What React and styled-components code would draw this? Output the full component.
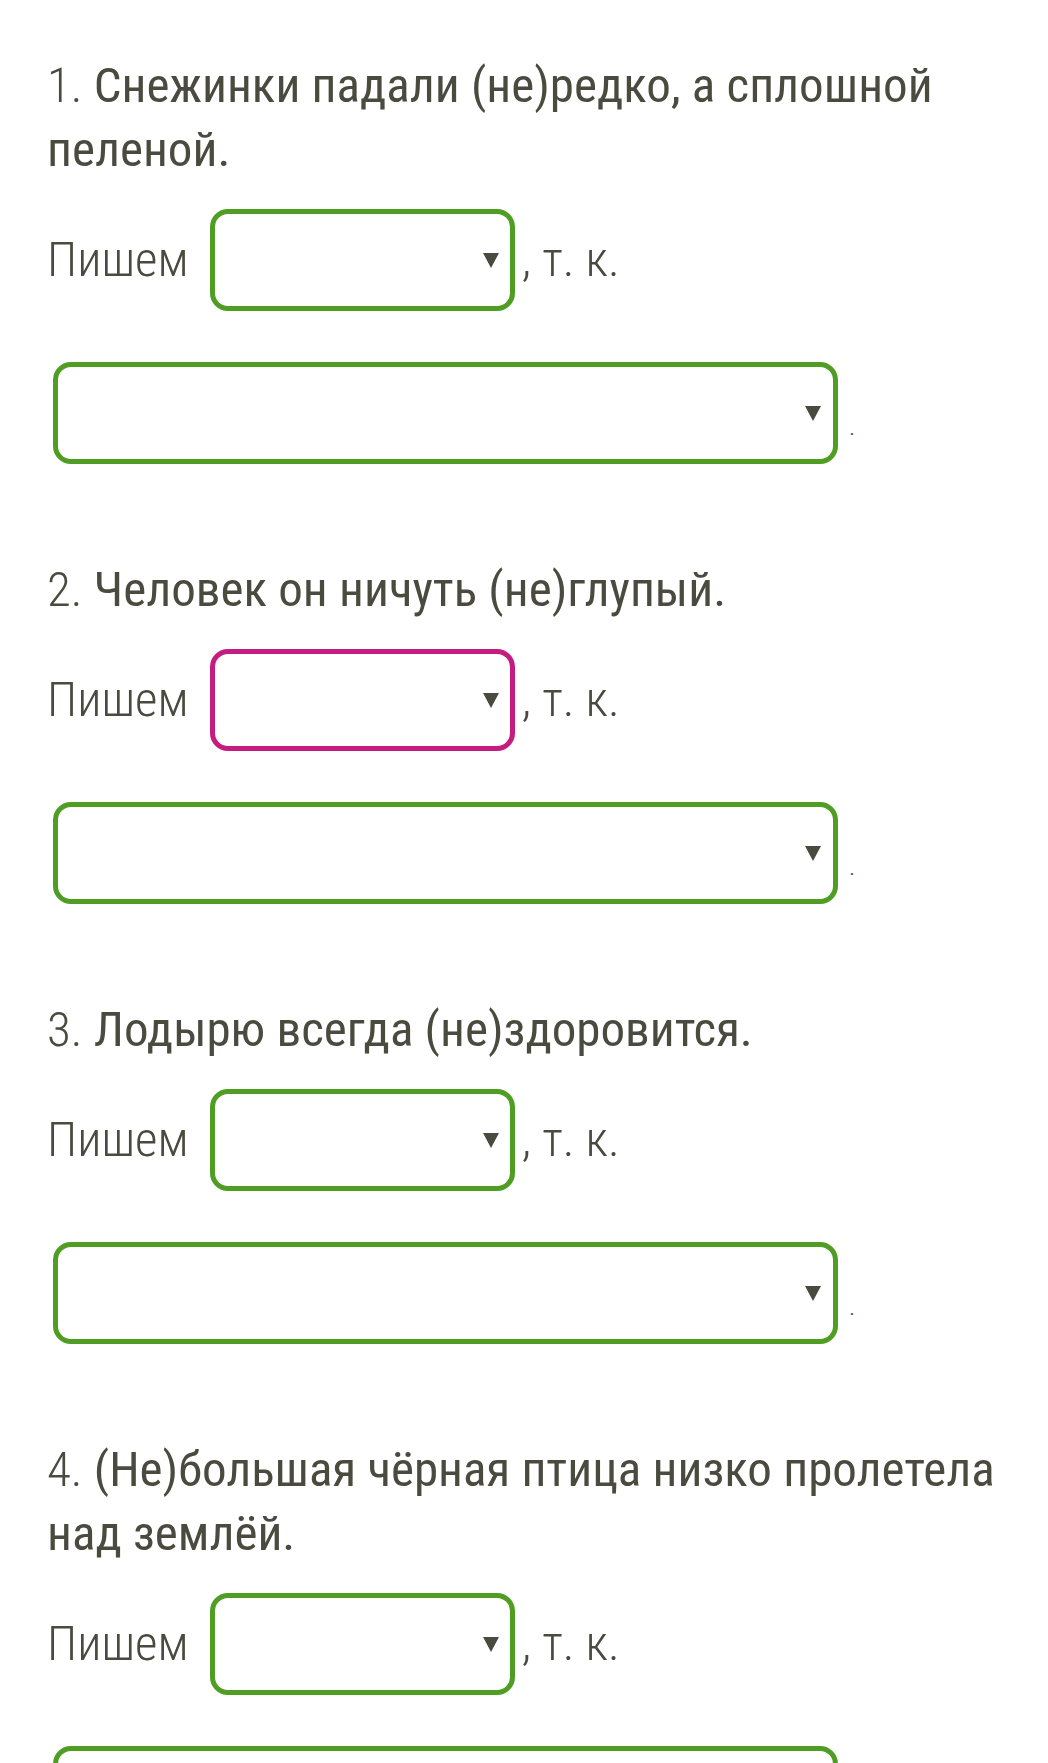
import React from "react";
import styled, { createGlobalStyle } from "styled-components";

const Global = createGlobalStyle`
  html, body { margin: 0; padding: 0; background: #ffffff; }
  body { font-family: "Roboto Condensed", Roboto, "Noto Sans", sans-serif; font-stretch: condensed; color: #4b4b40; }
`;

const Page = styled.div`
  padding: 54px 0 0 47px;
  width: 1048px;
  box-sizing: border-box;
`;

const Item = styled.section`
  margin-bottom: 94px;
`;

const Heading = styled.p`
  margin: 0;
  font-size: 49px;
  line-height: 64px;
  font-weight: 400;
  font-stretch: condensed;
  color: #4a4a3f;
  max-width: 1000px;
`;

const Num = styled.span`
  font-weight: 300;
`;

const Row = styled.div`
  display: flex;
  align-items: center;
  margin-top: 27px;
  font-size: 49px;
  font-weight: 300;
  font-stretch: condensed;
  color: #4a4a3f;
`;

const Word = styled.span`
  line-height: 64px;
  margin-right: 21px;
`;

const Tail = styled.span`
  line-height: 64px;
  margin-left: 7px;
`;

const Dropdown = styled.div`
  box-sizing: border-box;
  width: ${(p) => (p.$wide ? "785px" : "305px")};
  height: 102px;
  border: 5px solid ${(p) => (p.$error ? "#c41c7f" : "#4f9d22")};
  border-radius: 18px;
  display: flex;
  align-items: center;
  justify-content: flex-end;
  padding-right: ${(p) => (p.$wide ? "12px" : "11px")};
  background: #fff;
`;

const WideRow = styled.div`
  display: flex;
  align-items: center;
  margin-top: 51px;
  margin-left: 6px;
`;

const Dot = styled.span`
  font-size: 26px;
  font-weight: 300;
  color: #4a4a3f;
  margin-left: 11px;
  margin-top: 26px;
`;

const Arrow = () => (
  <svg width="16" height="15" viewBox="0 0 16 15">
    <polygon points="0,0 16,0 8,15" fill="#4a4a3f" />
  </svg>
);

const items = [
  { n: "1.", text: "Снежинки падали (не)редко, а сплошной пеленой." },
  { n: "2.", text: "Человек он ничуть (не)глупый.", error: true },
  { n: "3.", text: "Лодырю всегда (не)здоровится." },
  { n: "4.", text: "(Не)большая чёрная птица низко пролетела над землёй." },
];

export default function App() {
  return (
    <>
      <Global />
      <Page>
        {items.map((it) => (
          <Item key={it.n}>
            <Heading>
              <Num>{it.n}</Num> {it.text}
            </Heading>
            <Row>
              <Word>Пишем</Word>
              <Dropdown $error={it.error}>
                <Arrow />
              </Dropdown>
              <Tail>, т. к.</Tail>
            </Row>
            <WideRow>
              <Dropdown $wide>
                <Arrow />
              </Dropdown>
              <Dot>.</Dot>
            </WideRow>
          </Item>
        ))}
      </Page>
    </>
  );
}
